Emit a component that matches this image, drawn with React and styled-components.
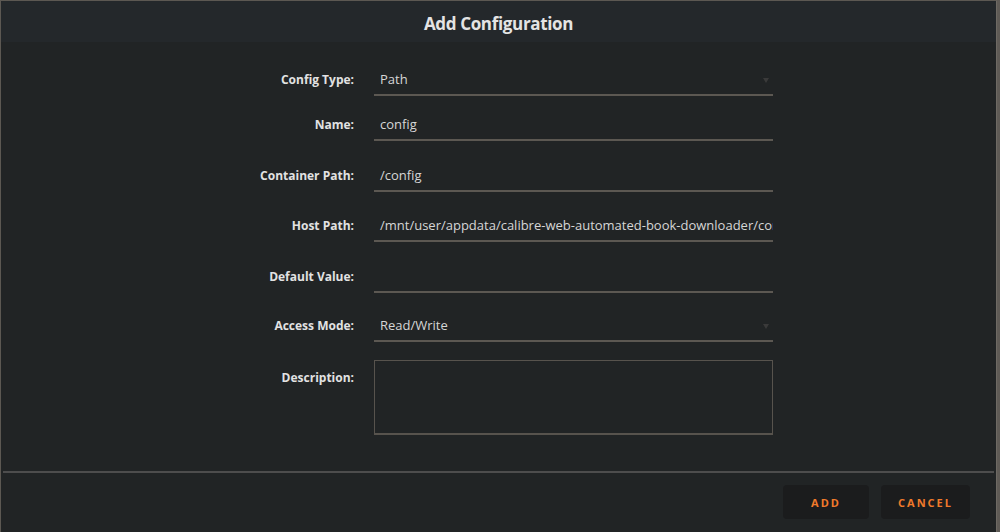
import React from "react";
import styled, { createGlobalStyle } from "styled-components";

const GlobalStyle = createGlobalStyle`
  html, body {
    margin: 0;
    padding: 0;
    background: #5f5b56;
    font-family: "Open Sans", "Noto Sans", sans-serif;
  }
`;

const Dialog = styled.div`
  width: 997px;
  height: 540px;
  background-color: #212425;
  border-left: 1px solid #5c5852;
  border-top: 1px solid #5c5852;
  border-right: 1px solid #6e6a64;
  box-sizing: border-box;
  display: flex;
  flex-direction: column;
  overflow: hidden;
`;

const Header = styled.div`
  height: 41px;
  flex-shrink: 0;
  background-color: #24282b;
  display: flex;
  align-items: center;
  justify-content: center;
  padding-top: 3px;
  box-sizing: border-box;
  h1 {
    margin: 0;
    font-size: 17px;
    font-weight: 700;
    color: #e4e4e4;
    letter-spacing: -0.02em;
  }
`;

const Form = styled.div`
  display: flex;
  flex-direction: column;
  align-items: center;
  padding: 24px 4px 0 0;
  height: 429px;
  box-sizing: border-box;
`;

const Row = styled.div`
  display: grid;
  grid-template-columns: 134px 399px;
  column-gap: 20px;
  align-items: start;
  margin-bottom: ${(props) => props.$gap}px;
`;

const Label = styled.label`
  text-align: right;
  font-size: 12px;
  font-weight: 700;
  color: #e2e2e2;
  line-height: 28px;
  padding-top: ${(props) => (props.$area ? 4 : 0)}px;
`;

const Field = styled.div`
  position: relative;
  height: 26px;
  border-bottom: 2px solid #5c5852;
  padding: 0 6px 2px;
  display: flex;
  align-items: center;
  font-size: 13px;
  color: #d6d6d6;
  white-space: nowrap;
  overflow: hidden;
`;

const Caret = styled.span`
  position: absolute;
  right: 4px;
  top: 12px;
  width: 0;
  height: 0;
  border-left: 3px solid transparent;
  border-right: 3px solid transparent;
  border-top: 5px solid #3a3a3a;
`;

const TextArea = styled.div`
  height: 72px;
  border: 2px solid #57534d;
  border-width: 1px 1px 2px 1px;
`;

const Divider = styled.div`
  margin: 0 2px 0 2px;
  height: 2px;
  background-color: #4d4d4d;
`;

const Footer = styled.div`
  display: flex;
  justify-content: flex-end;
  gap: 12px;
  padding: 12px 26px 0 0;
`;

const Button = styled.button`
  width: ${(props) => props.$width}px;
  height: 34px;
  border: none;
  border-radius: 4px;
  background-color: #1b1c1d;
  color: #f07a2b;
  font-family: "Open Sans", sans-serif;
  font-size: 11px;
  font-weight: 700;
  letter-spacing: 2px;
  text-transform: uppercase;
`;

const fields = [
  { label: "Config Type:", value: "Path", select: true, gap: 15 },
  { label: "Name:", value: "config", gap: 21 },
  { label: "Container Path:", value: "/config", gap: 20 },
  {
    label: "Host Path:",
    value: "/mnt/user/appdata/calibre-web-automated-book-downloader/config",
    gap: 21,
  },
  { label: "Default Value:", value: "", gap: 19 },
  { label: "Access Mode:", value: "Read/Write", select: true, gap: 18 },
];

export default function App() {
  return (
    <>
      <GlobalStyle />
      <Dialog>
        <Header>
          <h1>Add Configuration</h1>
        </Header>
        <Form>
          {fields.map((field) => (
            <Row key={field.label} $gap={field.gap}>
              <Label>{field.label}</Label>
              <Field>
                {field.value}
                {field.select && <Caret />}
              </Field>
            </Row>
          ))}
          <Row $gap={0}>
            <Label $area>Description:</Label>
            <TextArea />
          </Row>
        </Form>
        <Divider />
        <Footer>
          <Button $width={86}>Add</Button>
          <Button $width={89}>Cancel</Button>
        </Footer>
      </Dialog>
    </>
  );
}
